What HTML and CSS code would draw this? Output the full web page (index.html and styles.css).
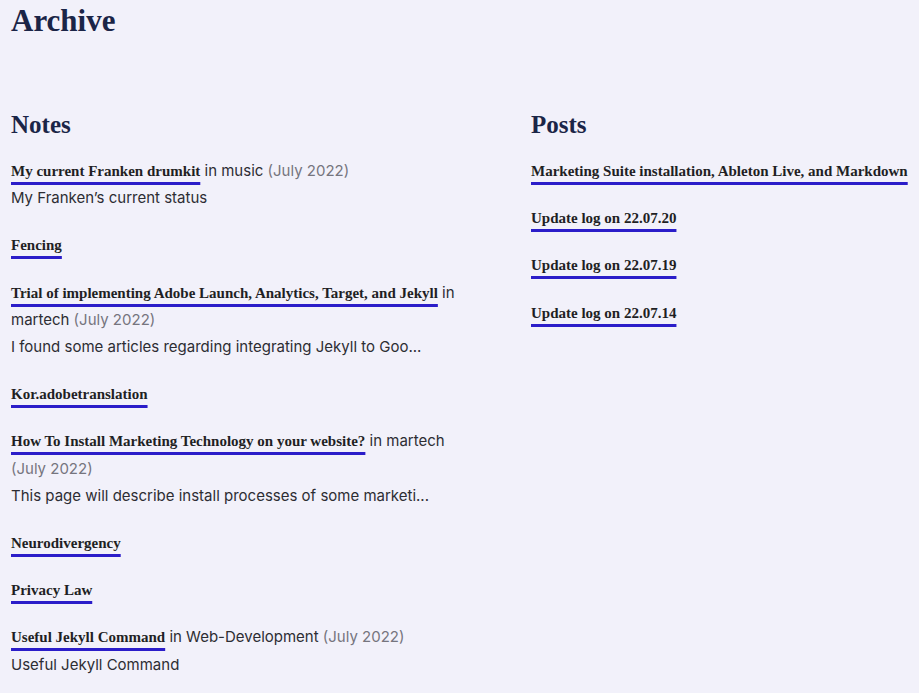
FILE: index.html
```html
<!DOCTYPE html>
<html lang="en">
<head>
<meta charset="utf-8">
<title>Archive</title>
<link rel="stylesheet" href="styles.css">
</head>
<body>
<main class="page">
  <h1 class="title">Archive</h1>
  <div class="columns">
    <section class="col">
      <h2 class="heading">Notes</h2>
      <ul class="list list-notes">
        <li class="item">
          <div class="line"><a class="link" href="#">My current Franken drumkit</a> in music <span class="date">(July 2022)</span></div>
          <div class="line">My Franken’s current status</div>
        </li>
        <li class="item"><div class="line"><a class="link" href="#">Fencing</a></div></li>
        <li class="item">
          <div class="line"><a class="link" href="#">Trial of implementing Adobe Launch, Analytics, Target, and Jekyll</a> in martech <span class="date">(July 2022)</span></div>
          <div class="line">I found some articles regarding integrating Jekyll to Goo...</div>
        </li>
        <li class="item"><div class="line"><a class="link" href="#">Kor.adobetranslation</a></div></li>
        <li class="item">
          <div class="line"><a class="link" href="#">How To Install Marketing Technology on your website?</a> in martech <span class="date">(July 2022)</span></div>
          <div class="line">This page will describe install processes of some marketi...</div>
        </li>
        <li class="item"><div class="line"><a class="link" href="#">Neurodivergency</a></div></li>
        <li class="item"><div class="line"><a class="link" href="#">Privacy Law</a></div></li>
        <li class="item">
          <div class="line"><a class="link" href="#">Useful Jekyll Command</a> in Web-Development <span class="date">(July 2022)</span></div>
          <div class="line">Useful Jekyll Command</div>
        </li>
      </ul>
    </section>
    <section class="col">
      <h2 class="heading">Posts</h2>
      <ul class="list">
        <li class="item"><div class="line"><a class="link" href="#">Marketing Suite installation, Ableton Live, and Markdown</a></div></li>
        <li class="item"><div class="line"><a class="link" href="#">Update log on 22.07.20</a></div></li>
        <li class="item"><div class="line"><a class="link" href="#">Update log on 22.07.19</a></div></li>
        <li class="item"><div class="line"><a class="link" href="#">Update log on 22.07.14</a></div></li>
      </ul>
    </section>
  </div>
</main>
</body>
</html>
```
FILE: styles.css
```css
html, body {
  margin: 0;
  padding: 0;
  background: #f2f1fa;
}
body {
  font-family: Inter, "Noto Sans", sans-serif;
  font-size: 15px;
  color: #2d2d33;
}
.page {
  padding: 0 11px;
}
.title {
  font-family: "Liberation Serif", serif;
  font-weight: 700;
  font-size: 31px;
  line-height: 42px;
  color: #1b2547;
  margin: 0 0 67px;
}
.columns {
  display: grid;
  grid-template-columns: 520px 1fr;
}
.heading {
  font-family: "Liberation Serif", serif;
  font-weight: 700;
  font-size: 25px;
  line-height: 32px;
  color: #1b2547;
  margin: 0 0 16px;
}
.list {
  list-style: none;
  margin: 0;
  padding: 0;
  display: flex;
  flex-direction: column;
  gap: 20px;
}
.list-notes {
  width: 470px;
}
.line {
  line-height: 27.2px;
}
.link {
  font-family: "Liberation Serif", serif;
  font-weight: 700;
  font-size: 15px;
  line-height: 15px;
  color: #1f1f24;
  text-decoration: underline;
  text-decoration-color: #2b1dc9;
  text-decoration-thickness: 3px;
  text-underline-offset: 6px;
}
.date {
  color: #76757e;
}
```
